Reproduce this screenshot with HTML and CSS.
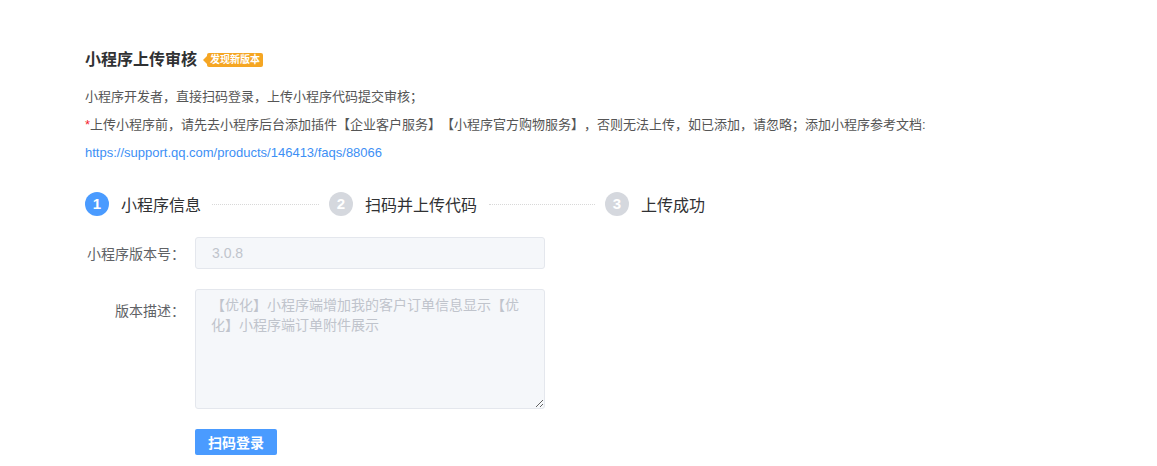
FILE: index.html
```html
<!DOCTYPE html>
<html lang="zh-CN">

<head>
    <meta charset="UTF-8">
    <meta name="viewport" content="width=device-width, initial-scale=1.0">
    <title>小程序上传审核</title>
    <link rel="stylesheet" href="styles.css">
</head>

<body>
    <div class="page">
        <div class="title-row">
            <h1 class="title">小程序上传审核</h1>
            <span class="badge">发现新版本</span>
        </div>

        <div class="intro">
            <p>小程序开发者，直接扫码登录，上传小程序代码提交审核；</p>
            <p><span class="star">*</span>上传小程序前，请先去小程序后台添加插件【企业客户服务】【小程序官方购物服务】，否则无法上传，如已添加，请忽略；添加小程序参考文档:</p>
            <p><a class="link" href="#">https://support.qq.com/products/146413/faqs/88066</a></p>
        </div>

        <div class="steps">
            <div class="step active">
                <span class="step-num">1</span>
                <span class="step-text">小程序信息</span>
            </div>
            <div class="step-line line-1"></div>
            <div class="step">
                <span class="step-num">2</span>
                <span class="step-text">扫码并上传代码</span>
            </div>
            <div class="step-line line-2"></div>
            <div class="step">
                <span class="step-num">3</span>
                <span class="step-text">上传成功</span>
            </div>
        </div>

        <form class="form">
            <div class="form-row">
                <label class="form-label" for="version">小程序版本号：</label>
                <input class="form-input" id="version" type="text" value="3.0.8" disabled>
            </div>
            <div class="form-row">
                <label class="form-label label-top" for="desc">版本描述：</label>
                <textarea class="form-textarea" id="desc" disabled>【优化】小程序端增加我的客户订单信息显示【优化】小程序端订单附件展示</textarea>
            </div>
            <div class="form-row">
                <span class="form-label"></span>
                <button class="btn" type="button">扫码登录</button>
            </div>
        </form>
    </div>
</body>

</html>
```

FILE: styles.css
```css
body {
    margin: 0;
    padding: 0;
    background: #fff;
    font-family: "Liberation Sans", "Noto Sans CJK SC", sans-serif;
    color: #606266;
    text-spacing-trim: space-all;
}

.page {
    padding: 49px 0 0 85px;
}

.title-row {
    display: flex;
    align-items: center;
    height: 22px;
}

.title {
    margin: 0;
    font-size: 16px;
    line-height: 22px;
    font-weight: bold;
    color: #303133;
}

.badge {
    position: relative;
    margin-left: 10px;
    height: 14px;
    padding: 0 3px;
    background: #f5a623;
    color: #fff;
    font-size: 10px;
    line-height: 14px;
    font-weight: bold;
    border-radius: 2px;
}

.badge::before {
    content: "";
    position: absolute;
    left: -4px;
    top: 2.5px;
    border-top: 4.5px solid transparent;
    border-bottom: 4.5px solid transparent;
    border-right: 4px solid #f5a623;
}

.intro {
    margin-top: 12px;
}

.intro p {
    margin: 0;
    font-size: 13px;
    line-height: 28px;
    color: #555;
}

.star {
    color: #f5222d;
}

.link {
    color: #3d8ff5;
    text-decoration: none;
}

.steps {
    display: flex;
    align-items: center;
    margin-top: 25px;
    height: 24px;
}

.step {
    display: flex;
    align-items: center;
}

.step-num {
    width: 24px;
    height: 24px;
    border-radius: 50%;
    background: #d5d8de;
    color: #fff;
    font-size: 15px;
    font-weight: bold;
    line-height: 24px;
    text-align: center;
}

.step.active .step-num {
    background: #4a9bff;
}

.step-text {
    margin-left: 12px;
    font-size: 16px;
    color: #303133;
}

.step-line {
    height: 0;
    border-top: 1px dotted #d8d8d8;
    margin-right: 10px;
}

.line-1 {
    width: 107px;
    margin-left: 11px;
}

.line-2 {
    width: 106px;
    margin-left: 12px;
}

.form {
    margin-top: 21px;
}

.form-row {
    display: flex;
    align-items: center;
    margin-bottom: 20px;
}

.form-row:has(.form-textarea) {
    align-items: flex-start;
}

.form-label {
    width: 100px;
    padding-right: 10px;
    text-align: right;
    font-size: 14px;
    color: #606266;
}

.label-top {
    padding-top: 11px;
}

.form-input,
.form-textarea {
    box-sizing: border-box;
    width: 350px;
    margin: 0;
    border: 1px solid #e4e7ed;
    border-radius: 3px;
    background: #f5f7fa;
    color: #c0c4cc;
    font-family: "Liberation Sans", "Noto Sans CJK SC", sans-serif;
    font-size: 14px;
}

.form-input {
    height: 32px;
    padding: 0 16px;
}

.form-textarea {
    height: 120px;
    padding: 5px 15px;
    line-height: 20px;
    resize: vertical;
}

.btn {
    height: 26px;
    padding: 0 13px;
    border: none;
    border-radius: 2px;
    background: #4a9bff;
    color: #fff;
    font-family: "Liberation Sans", "Noto Sans CJK SC", sans-serif;
    font-size: 14px;
    font-weight: bold;
    cursor: pointer;
}
```
